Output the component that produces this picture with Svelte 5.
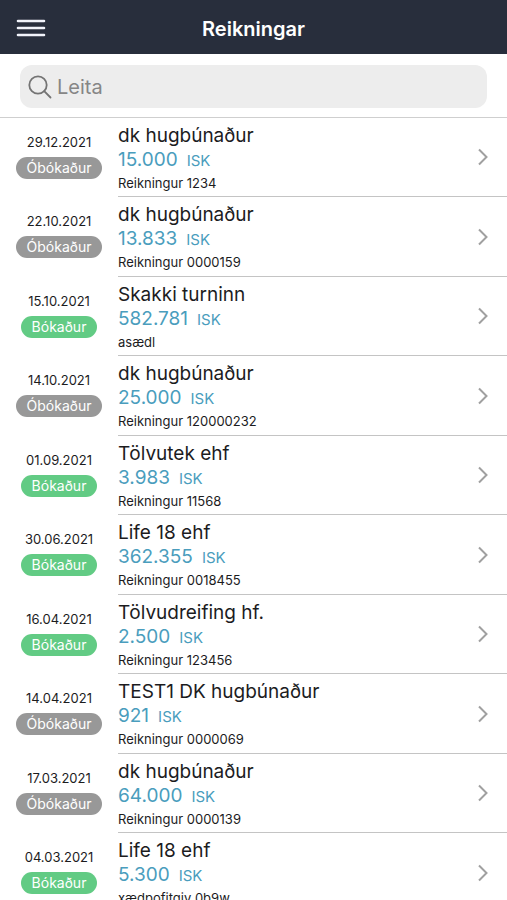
<script lang="ts">
  interface Invoice {
    date: string;
    booked: boolean;
    customer: string;
    amount: string;
    reference: string;
  }

  const invoices: Invoice[] = [
    { date: "29.12.2021", booked: false, customer: "dk hugbúnaður", amount: "15.000", reference: "Reikningur 1234" },
    { date: "22.10.2021", booked: false, customer: "dk hugbúnaður", amount: "13.833", reference: "Reikningur 0000159" },
    { date: "15.10.2021", booked: true, customer: "Skakki turninn", amount: "582.781", reference: "asædl" },
    { date: "14.10.2021", booked: false, customer: "dk hugbúnaður", amount: "25.000", reference: "Reikningur 120000232" },
    { date: "01.09.2021", booked: true, customer: "Tölvutek ehf", amount: "3.983", reference: "Reikningur 11568" },
    { date: "30.06.2021", booked: true, customer: "Life 18 ehf", amount: "362.355", reference: "Reikningur 0018455" },
    { date: "16.04.2021", booked: true, customer: "Tölvudreifing hf.", amount: "2.500", reference: "Reikningur 123456" },
    { date: "14.04.2021", booked: false, customer: "TEST1 DK hugbúnaður", amount: "921", reference: "Reikningur 0000069" },
    { date: "17.03.2021", booked: false, customer: "dk hugbúnaður", amount: "64.000", reference: "Reikningur 0000139" },
    { date: "04.03.2021", booked: true, customer: "Life 18 ehf", amount: "5.300", reference: "xædpofitgiv 0b9w" },
  ];

  let query = $state("");

  const visible = $derived(
    invoices.filter((i) =>
      `${i.customer} ${i.reference}`.toLowerCase().includes(query.toLowerCase()),
    ),
  );
</script>

<div class="screen">
  <header>
    <button class="menu" type="button" aria-label="Valmynd">
      <svg width="30" height="20" viewBox="0 0 30 20" aria-hidden="true">
        <path d="M2 3H28M2 10H28M2 17H28" />
      </svg>
    </button>
    <h1>Reikningar</h1>
  </header>

  <div class="search">
    <label class="field">
      <svg width="24" height="24" viewBox="0 0 24 24" aria-hidden="true">
        <circle cx="10" cy="10" r="8.7" />
        <path d="M16.2 16.2L22.5 22.5" />
      </svg>
      <input type="text" placeholder="Leita" aria-label="Leita" bind:value={query} />
    </label>
  </div>

  <ul>
    {#each visible as invoice}
      <li>
        <a href="#reikningur">
          <span class="side">
            <span class="date">{invoice.date}</span>
            <span class="badge" class:booked={invoice.booked}>
              {invoice.booked ? "Bókaður" : "Óbókaður"}
            </span>
          </span>
          <span class="main">
            <span class="details">
              <span class="customer">{invoice.customer}</span>
              <span class="amount">{invoice.amount}<span class="currency">ISK</span></span>
              <span class="reference">{invoice.reference}</span>
            </span>
            <svg width="12" height="18" viewBox="0 0 12 18" aria-hidden="true">
              <path d="M2 1.5L9.5 9L2 16.5" />
            </svg>
          </span>
        </a>
      </li>
    {/each}
  </ul>
</div>

<style>
  :global(body) {
    background: #fff;
  }

  .screen {
    display: flex;
    flex-direction: column;
    height: 100vh;
    font-family: Inter, "Liberation Sans", sans-serif;
    color: #1c1c1e;
  }

  header {
    display: grid;
    grid-template-columns: 48px 1fr 48px;
    align-items: center;
    flex: none;
    height: 54px;
    background: #282e3c;
    color: #fff;
  }

  .menu {
    display: flex;
    justify-content: flex-end;
    align-items: center;
    height: 44px;
    padding: 2px 2px 0 0;
    border: 0;
    background: none;
  }

  .menu path {
    stroke: #f1f3fa;
    stroke-width: 2.6;
    stroke-linecap: round;
  }

  h1 {
    margin: 0;
    padding-top: 4px;
    font-size: 20px;
    line-height: 24px;
    font-weight: 600;
    text-align: center;
  }

  .search {
    flex: none;
    padding: 11px 20px 9px;
    border-bottom: 1px solid #cfcfcf;
  }

  .field {
    display: flex;
    align-items: center;
    gap: 5px;
    height: 43px;
    padding: 0 8px;
    border-radius: 12px;
    background: #ededed;
  }

  .field svg {
    flex: none;
    fill: none;
    stroke: #747474;
    stroke-width: 1.8;
    stroke-linecap: round;
  }

  input {
    flex: 1;
    min-width: 0;
    padding: 0;
    border: 0;
    outline: 0;
    background: none;
    font: inherit;
    font-size: 20px;
    line-height: 24px;
    color: inherit;
  }

  input::placeholder {
    color: #868686;
    opacity: 1;
  }

  ul {
    flex: 1;
    min-height: 0;
    margin: 0;
    padding: 0;
    list-style: none;
    overflow-y: auto;
    scrollbar-width: none;
  }

  a {
    display: flex;
    height: 79px;
    color: inherit;
    text-decoration: none;
  }

  li:nth-child(even) a {
    height: 80px;
  }

  .side {
    display: flex;
    flex-direction: column;
    align-items: center;
    flex: none;
    gap: 5px;
    width: 118px;
    padding-top: 14px;
    box-sizing: border-box;
  }

  .date {
    font-size: 13px;
    line-height: 20px;
  }

  .badge {
    padding: 0 11px;
    border-radius: 11px;
    background: #989898;
    color: #fff;
    font-size: 14px;
    line-height: 22px;
  }

  .badge.booked {
    background: #62cb84;
  }

  .main {
    display: flex;
    flex: 1;
    align-items: center;
    justify-content: space-between;
    min-width: 0;
    padding-right: 18px;
    border-bottom: 1px solid #c4c4c4;
  }

  .main svg {
    flex: none;
    fill: none;
    stroke: #a0a0a0;
    stroke-width: 2;
  }

  .details {
    display: flex;
    flex-direction: column;
    min-width: 0;
    padding-top: 2px;
  }

  .customer {
    font-size: 19px;
    line-height: 26px;
  }

  .amount {
    font-size: 19px;
    line-height: 22px;
    color: #4a9dbd;
  }

  .currency {
    margin-left: 9px;
    font-size: 15px;
  }

  .reference {
    font-size: 13px;
    line-height: 22px;
  }
</style>
